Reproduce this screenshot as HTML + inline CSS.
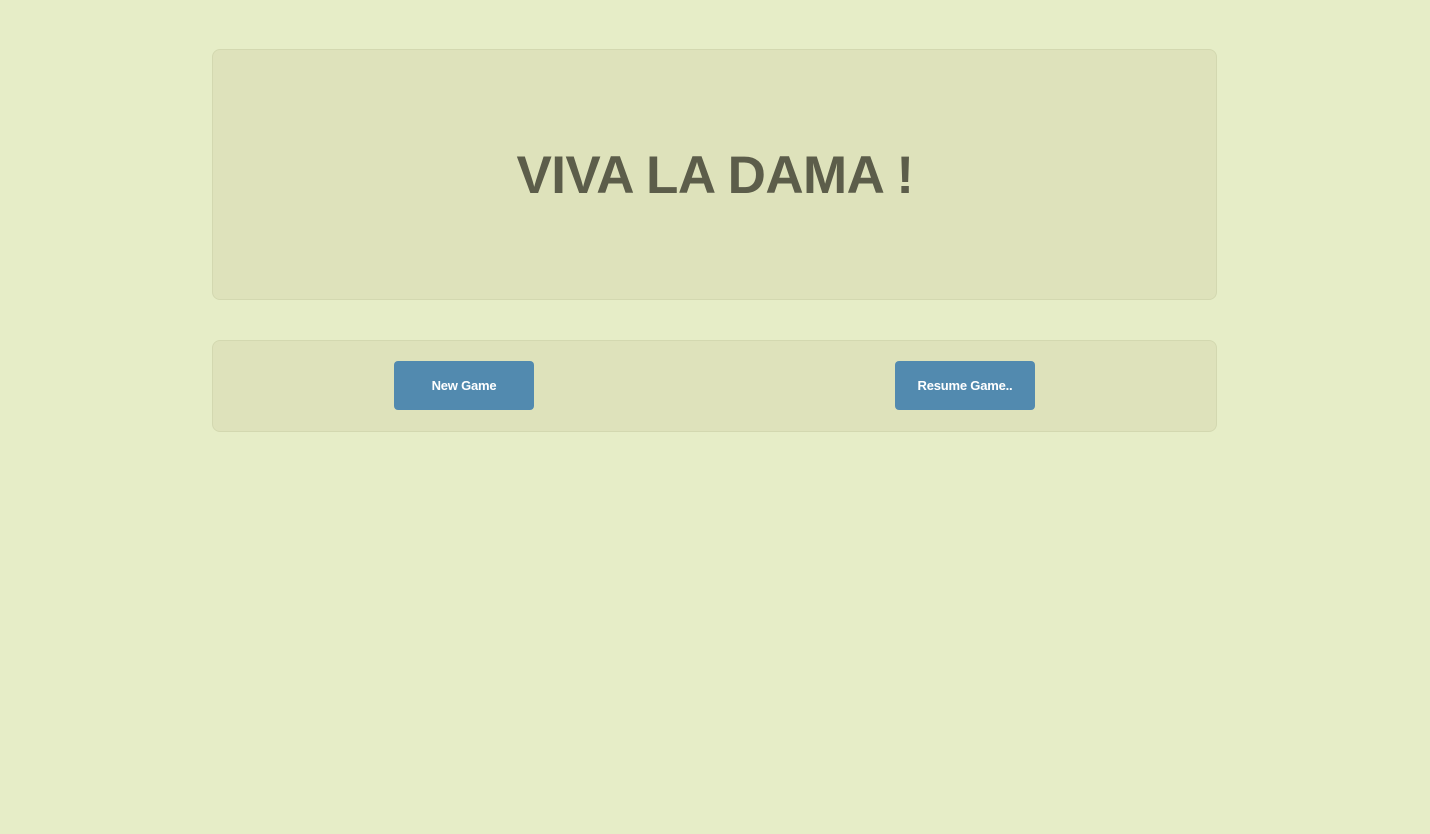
<!DOCTYPE html>
<html><head><style>
html,body{margin:0;padding:0;background:#e6edc7;width:1430px;height:834px;overflow:hidden;font-family:"Liberation Sans",Arial,sans-serif}
.box{position:absolute;left:212px;width:1003px;background:#dee2bb;border:1px solid #d3d8b0;border-radius:8px}
#b1{top:49px;height:249px}
#b2{top:340px;height:90px}
h1{position:absolute;left:0;right:0;top:146px;margin:0;text-align:center;font-size:53px;letter-spacing:-0.6px;font-weight:bold;color:#5c5d4a;line-height:60px}
.btn{position:absolute;top:361px;width:140px;height:49px;background:#528aaf;border-radius:4px;color:#fff;font-weight:bold;font-size:13px;letter-spacing:-0.2px;text-align:center;line-height:49px}
</style></head><body>
<div class="box" id="b1"></div>
<div class="box" id="b2"></div>
<h1>VIVA LA DAMA !</h1>
<div class="btn" style="left:394px">New Game</div>
<div class="btn" style="left:895px">Resume Game..</div>
</body></html>
